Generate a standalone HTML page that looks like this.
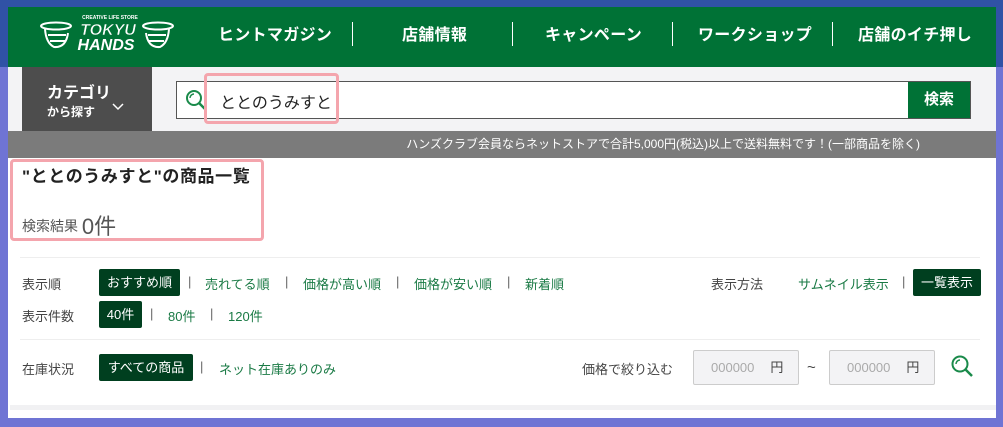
<!DOCTYPE html>
<html><head><meta charset="utf-8"><style>
*{margin:0;padding:0;box-sizing:border-box}
body{width:1003px;height:427px;overflow:hidden;background:#6f74d4;font-family:"Liberation Sans","Noto Sans CJK JP",sans-serif;position:relative}
.topb{position:absolute;left:0;top:0;width:1003px;height:67px;background:#3052a6}
.hdr{position:absolute;left:8px;top:7px;width:988px;height:60px;background:#007236}
.nav{position:absolute;top:3px;height:60px;display:flex;align-items:center;color:#fff;font-weight:bold;font-size:16px;letter-spacing:.3px}
.sep{position:absolute;top:22px;width:1px;height:24px;background:#fff}
.sarea{position:absolute;left:8px;top:67px;width:988px;height:64px;background:#f3f3f5}
.cat{position:absolute;left:22px;top:67px;width:130px;height:64px;background:#4d4d4d;color:#fff;font-weight:bold}
.sbox{position:absolute;left:176px;top:81px;width:795px;height:38px;border:1px solid #555;background:#fff}
.sbtn{position:absolute;left:908px;top:82px;width:62px;height:36px;background:#007236;color:#fff;font-weight:bold;font-size:15px;text-align:center;line-height:36px}
.gray{position:absolute;left:8px;top:131px;width:988px;height:27px;background:#7b7b7b;color:#fff;font-size:12px;text-align:right;padding-right:76px;line-height:27px}
.main{position:absolute;left:8px;top:158px;width:988px;height:260px;background:#fff}
.hl{position:absolute;border:3px solid #f4a5ad;border-radius:4px}
.t{position:absolute;font-size:13px;color:#444;white-space:nowrap}
.g{color:#1a7a45}
.p{color:#666}
.b{position:absolute;background:#003f1f;color:#fff;font-size:13px;border-radius:2px;text-align:center;line-height:28px;height:27px}
.line{position:absolute;left:20px;width:960px;height:1px;background:#eee}
.inp{position:absolute;top:350px;width:106px;height:35px;border:1px solid #ccc;background:#f3f3f5;border-radius:2px;font-size:13px;color:#aaa;line-height:33px}
</style></head><body>
<div class="topb"></div>
<div class="hdr"></div>
<svg style="position:absolute;left:38px;top:13px" width="140" height="40" viewBox="0 0 140 40">
<text x="72" y="6" font-size="5" fill="#fff" text-anchor="middle" font-weight="bold">CREATIVE LIFE STORE</text>
<g fill="none" stroke="#fff" stroke-width="2"><ellipse cx="18" cy="13" rx="15" ry="3.5"/><path d="M7 16 Q8 30 16 34 Q28 35 30 20"/><path d="M10 22 H28 M12 28 H27"/><ellipse cx="120" cy="13" rx="15" ry="3.5"/><path d="M131 16 Q130 30 122 34 Q110 35 108 20"/><path d="M110 22 H128 M111 28 H126"/></g>
<text x="70" y="22" font-size="16" font-weight="bold" font-style="italic" fill="#fff" text-anchor="middle" stroke="#007236" stroke-width=".5">TOKYU</text>
<text x="68" y="37" font-size="16" font-weight="bold" font-style="italic" fill="#fff" text-anchor="middle">HANDS</text>
</svg>
<div class="nav" style="left:218px">ヒントマガジン</div>
<div class="sep" style="left:352px"></div>
<div class="nav" style="left:402px">店舗情報</div>
<div class="sep" style="left:512px"></div>
<div class="nav" style="left:545px">キャンペーン</div>
<div class="sep" style="left:672px"></div>
<div class="nav" style="left:698px">ワークショップ</div>
<div class="sep" style="left:832px"></div>
<div class="nav" style="left:858px">店舗のイチ押し</div>
<div class="sarea"></div>
<div class="cat"><div style="position:absolute;left:25px;top:12px;font-size:16px">カテゴリ</div><div style="position:absolute;left:25px;top:36px;font-size:12px">から探す</div>
<svg style="position:absolute;left:90px;top:36px" width="12" height="8"><path d="M1 1 L6 6 L11 1" stroke="#fff" stroke-width="1.5" fill="none"/></svg></div>
<div class="sbox"></div>
<svg style="position:absolute;left:185px;top:89px" width="24" height="24"><circle cx="9" cy="9" r="7" stroke="#1a8a4a" stroke-width="2" fill="none"/><path d="M5 9 A4 4 0 0 1 9 5" stroke="#1a8a4a" stroke-width="1.5" fill="none"/><path d="M14 14 L20 20" stroke="#1a8a4a" stroke-width="2.5"/></svg>
<div style="position:absolute;left:220px;top:89px;font-size:16px;color:#222">ととのうみすと</div>
<div class="hl" style="left:204px;top:73px;width:135px;height:51px"></div>
<div class="sbtn">検索</div>
<div class="gray">ハンズクラブ会員ならネットストアで合計5,000円(税込)以上で送料無料です！(一部商品を除く)</div>
<div class="main"></div>
<div class="hl" style="left:10px;top:159px;width:254px;height:82px"></div>
<div style="position:absolute;left:22px;top:162px;font-size:17px;font-weight:bold;color:#222;letter-spacing:.6px">"ととのうみすと"の商品一覧</div>
<div class="t" style="left:22px;top:206px;font-size:14px;color:#555">検索結果 <span style="font-size:22px;position:relative;top:3px">0件</span></div>
<div class="line" style="top:257px"></div>
<div class="t" style="left:22px;top:274px">表示順</div>
<div class="b" style="left:99px;top:269px;width:81px">おすすめ順</div>
<div class="t p" style="left:188px;top:274px">|</div>
<div class="t g" style="left:205px;top:274px">売れてる順</div>
<div class="t p" style="left:285px;top:274px">|</div>
<div class="t g" style="left:303px;top:274px">価格が高い順</div>
<div class="t p" style="left:396px;top:274px">|</div>
<div class="t g" style="left:414px;top:274px">価格が安い順</div>
<div class="t p" style="left:507px;top:274px">|</div>
<div class="t g" style="left:525px;top:274px">新着順</div>
<div class="t" style="left:711px;top:274px">表示方法</div>
<div class="t g" style="left:798px;top:274px">サムネイル表示</div>
<div class="t p" style="left:902px;top:274px">|</div>
<div class="b" style="left:913px;top:269px;width:68px">一覧表示</div>
<div class="t" style="left:22px;top:306px">表示件数</div>
<div class="b" style="left:99px;top:301px;width:43px">40件</div>
<div class="t p" style="left:150px;top:306px">|</div>
<div class="t g" style="left:168px;top:306px">80件</div>
<div class="t p" style="left:210px;top:306px">|</div>
<div class="t g" style="left:228px;top:306px">120件</div>
<div class="line" style="top:339px"></div>
<div class="t" style="left:22px;top:359px">在庫状況</div>
<div class="b" style="left:99px;top:354px;width:94px">すべての商品</div>
<div class="t p" style="left:200px;top:359px">|</div>
<div class="t g" style="left:219px;top:359px">ネット在庫ありのみ</div>
<div class="t" style="left:582px;top:359px">価格で絞り込む</div>
<div class="inp" style="left:693px"><span style="margin-left:17px">000000</span><span style="margin-left:16px;color:#444">円</span></div>
<div class="t" style="left:807px;top:359px;font-size:15px">~</div>
<div class="inp" style="left:829px"><span style="margin-left:17px">000000</span><span style="margin-left:16px;color:#444">円</span></div>
<svg style="position:absolute;left:950px;top:354px" width="26" height="28"><circle cx="10" cy="10" r="7.5" stroke="#1a8a4a" stroke-width="2" fill="none"/><path d="M6 10 A4 4 0 0 1 10 6" stroke="#1a8a4a" stroke-width="1.5" fill="none"/><path d="M15.5 15.5 L22 22" stroke="#1a8a4a" stroke-width="2.5"/></svg>
<div style="position:absolute;left:10px;top:405px;width:986px;height:5px;background:#f1f1f3"></div>
</body></html>
